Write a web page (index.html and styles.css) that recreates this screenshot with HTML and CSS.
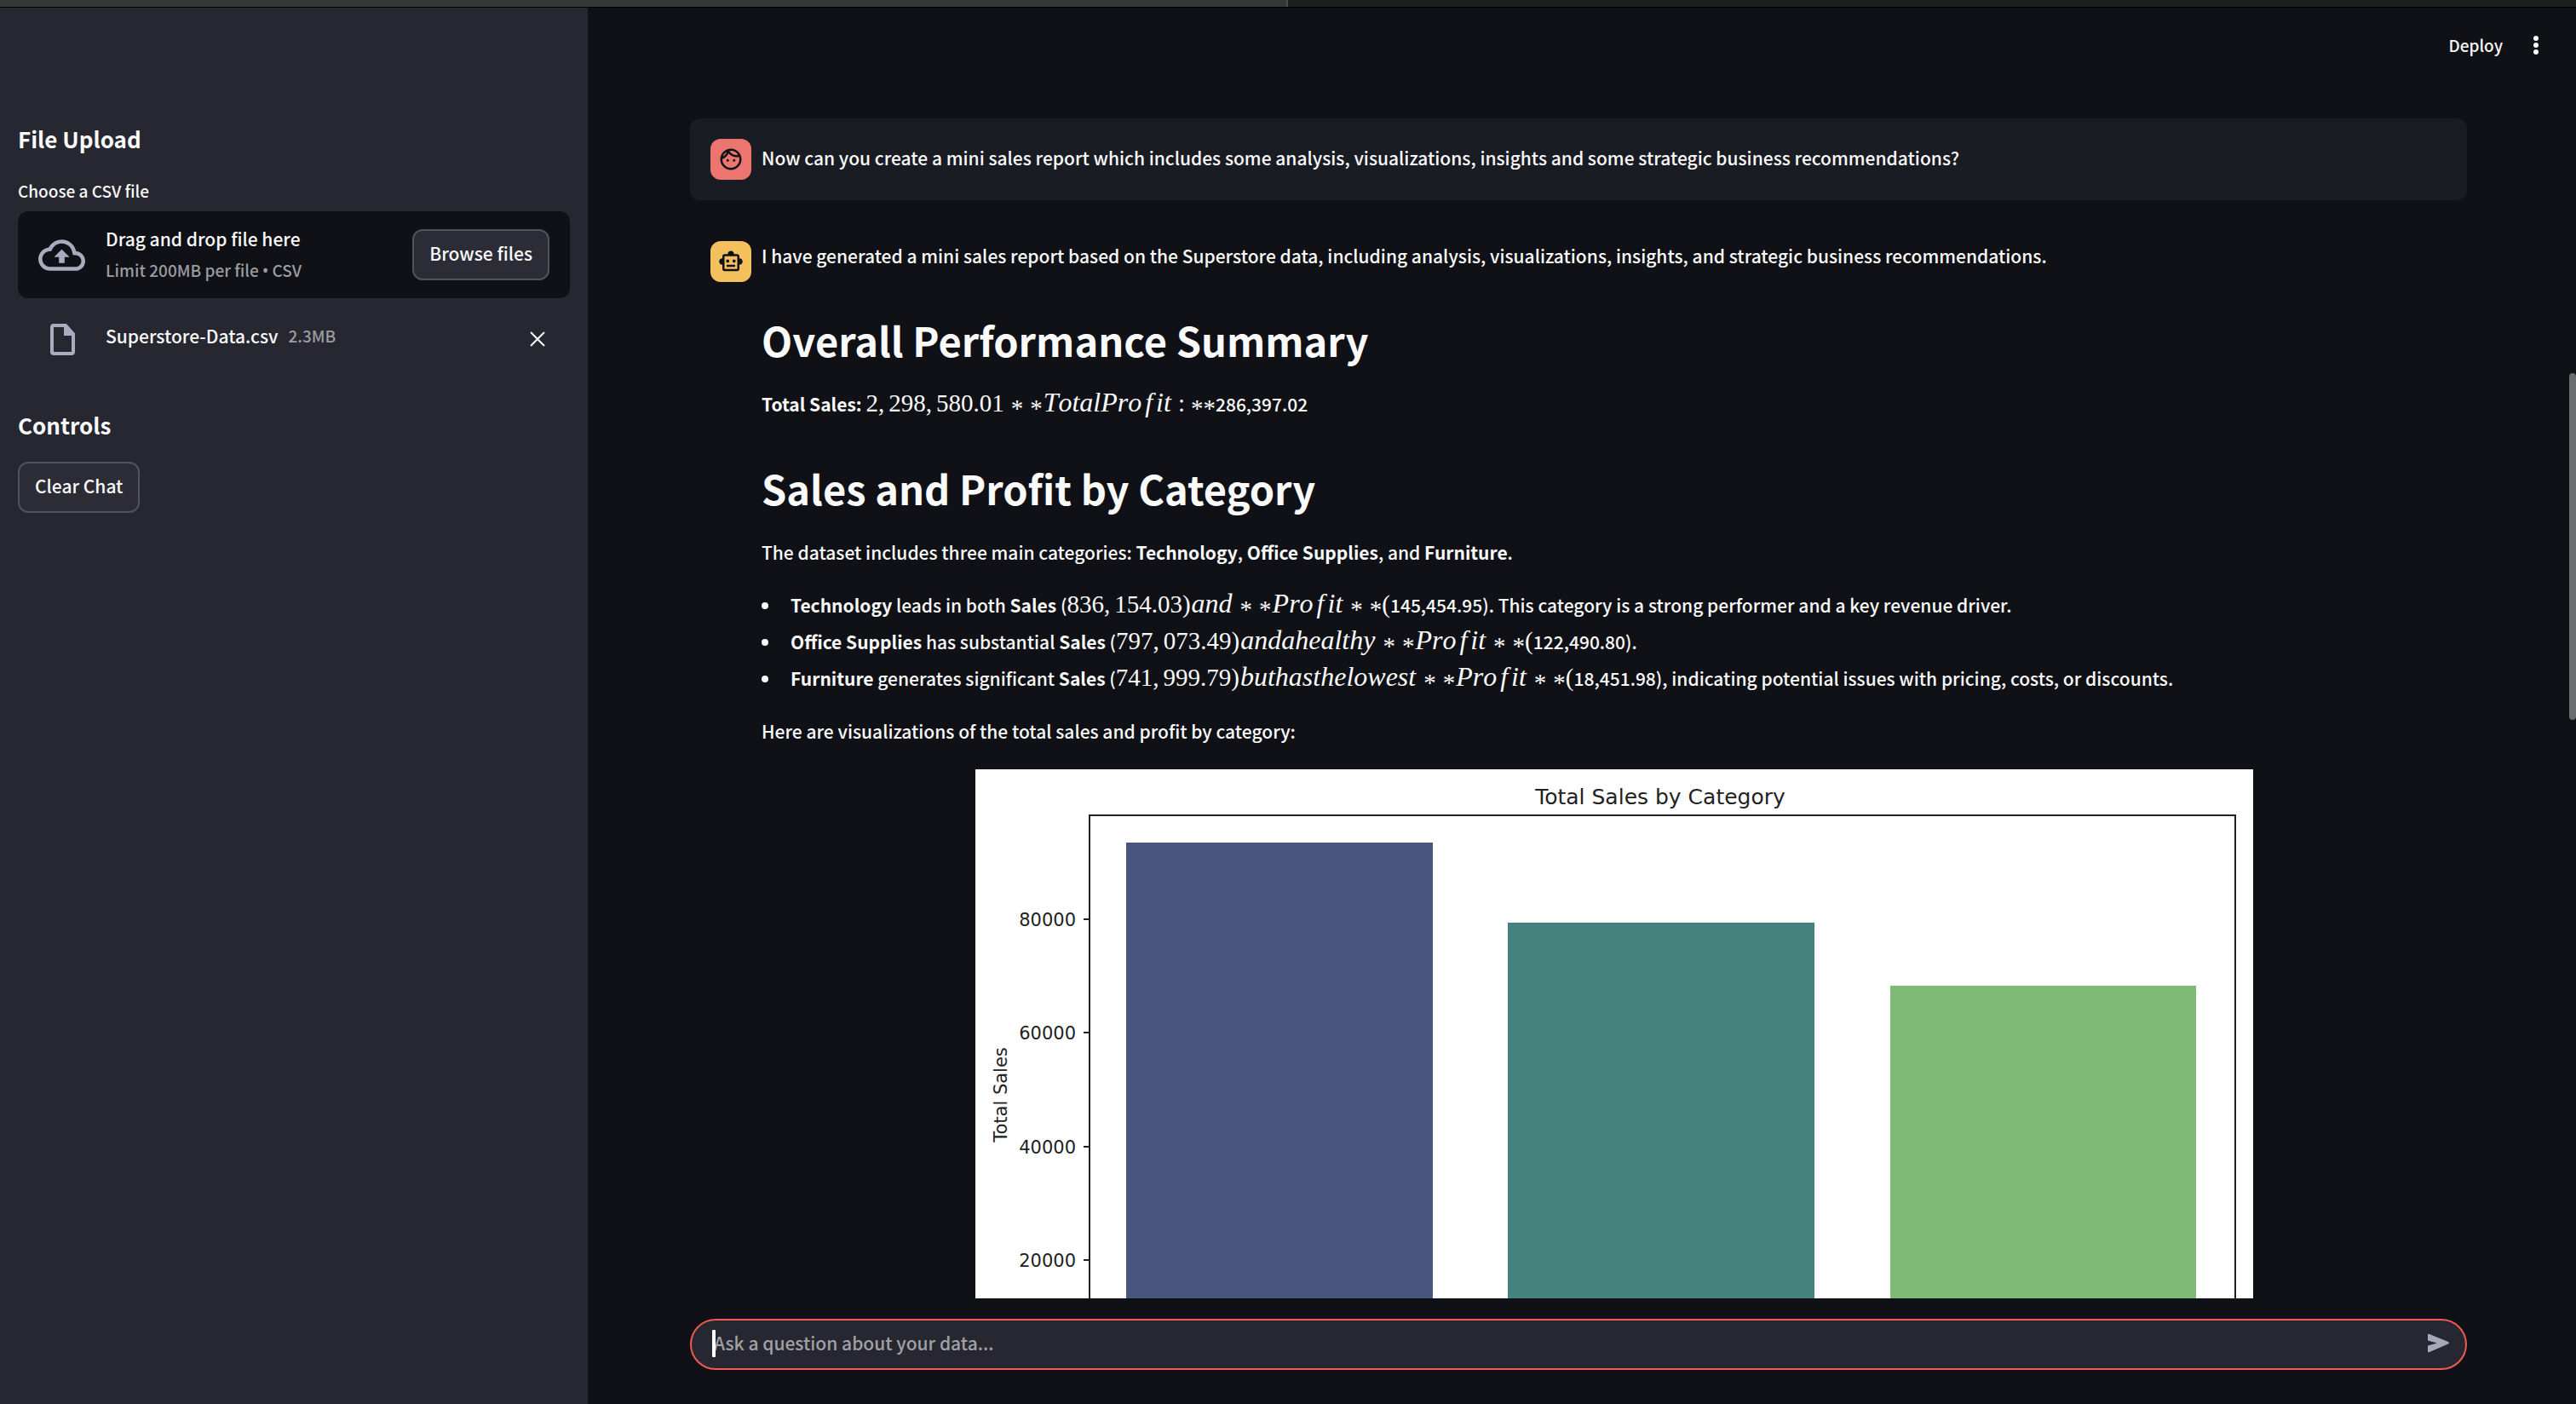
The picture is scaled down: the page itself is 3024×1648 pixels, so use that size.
FILE: index.html
```html
<!DOCTYPE html>
<html lang="en">
<head>
<meta charset="utf-8">
<title>Data Chat</title>
<link rel="stylesheet" href="styles.css">
</head>
<body>
<div class="window-strip"><span class="strip-tab"></span></div>
<div class="app">
  <aside class="sidebar">
    <h3 class="side-title">File Upload</h3>
    <label class="field-label" for="browse">Choose a CSV file</label>
    <div class="dropzone">
      <svg class="cloud-icon" viewBox="0 4 24 16" aria-hidden="true"><path d="M19.35 10.04C18.67 6.59 15.64 4 12 4 9.11 4 6.6 5.64 5.35 8.04 2.34 8.36 0 10.91 0 14c0 3.31 2.69 6 6 6h13c2.76 0 5-2.24 5-5 0-2.64-2.05-4.78-4.65-4.96zM19 18H6c-2.21 0-4-1.79-4-4 0-2.05 1.53-3.76 3.56-3.97l1.07-.11.5-.95C8.08 7.14 9.94 6 12 6c2.62 0 4.88 1.86 5.39 4.43l.3 1.5 1.53.11c1.56.1 2.78 1.41 2.78 2.96 0 1.65-1.35 3-3 3zM8 13h2.55v3h2.9v-3H16l-4-4z"/></svg>
      <div class="drop-text">
        <span>Drag and drop file here</span>
        <small class="hint">Limit 200MB per file <span class="bullet">•</span> CSV</small>
      </div>
      <button class="btn" id="browse" type="button">Browse files</button>
    </div>
    <div class="file-row">
      <svg class="file-icon" viewBox="0 0 29 37" aria-hidden="true"><path class="file-body" d="M4 2h14l9 10v21a2 2 0 0 1-2 2H4a2 2 0 0 1-2-2V4a2 2 0 0 1 2-2z"/><path class="file-fold" d="M16 1h3l9 11v2H16z"/></svg>
      <div class="file-text">
        <span>Superstore-Data.csv</span>
        <small class="hint">2.3MB</small>
      </div>
      <button class="icon-btn" type="button" aria-label="Remove file"><svg class="close-icon" viewBox="0 0 18 18" aria-hidden="true"><path d="M1 1l16 16M17 1L1 17"/></svg></button>
    </div>
    <h3 class="side-title">Controls</h3>
    <button class="btn" type="button">Clear Chat</button>
  </aside>

  <main class="main">
    <header class="toolbar">
      <button class="deploy" type="button">Deploy</button>
      <button class="icon-btn" type="button" aria-label="Menu"><svg class="dots-icon" viewBox="0 0 6 22" aria-hidden="true"><circle cx="3" cy="3" r="3"/><circle cx="3" cy="11" r="3"/><circle cx="3" cy="19" r="3"/></svg></button>
    </header>

    <section class="chat">
      <article class="message user">
        <span class="avatar"><svg viewBox="0 0 24 24" aria-hidden="true"><path d="M10.25 13c0 .69-.56 1.25-1.25 1.25S7.75 13.69 7.75 13s.56-1.25 1.25-1.25 1.25.56 1.25 1.25zM15 11.75c-.69 0-1.25.56-1.25 1.25s.56 1.25 1.25 1.25 1.25-.56 1.25-1.25-.56-1.25-1.25-1.25zM22 12c0 5.52-4.48 10-10 10S2 17.52 2 12 6.48 2 12 2s10 4.48 10 10zM10.66 4.12C12.06 6.44 14.6 8 17.5 8c.46 0 .91-.05 1.34-.12C17.44 5.56 14.9 4 12 4c-.46 0-.91.05-1.34.12zM4.42 9.47c1.71-.97 3.03-2.55 3.66-4.44C6.37 6 5.05 7.58 4.42 9.47zM20 12c0-.78-.12-1.53-.33-2.24-.7.15-1.42.24-2.17.24-3.13 0-5.92-1.44-7.76-3.69C8.69 8.87 6.6 10.88 4 11.86c.01.04 0 .09 0 .14 0 4.41 3.59 8 8 8s8-3.59 8-8z"/></svg></span>
        <div class="content">
          <p>Now can you create a mini sales report which includes some analysis, visualizations, insights and some strategic business recommendations?</p>
        </div>
      </article>

      <article class="message assistant">
        <span class="avatar"><svg viewBox="0 0 24 24" aria-hidden="true"><path d="M20 9V7c0-1.1-.9-2-2-2h-3c0-1.66-1.34-3-3-3S9 3.34 9 5H6c-1.1 0-2 .9-2 2v2c-1.66 0-3 1.34-3 3s1.34 3 3 3v4c0 1.1.9 2 2 2h12c1.1 0 2-.9 2-2v-4c1.66 0 3-1.34 3-3s-1.34-3-3-3zm-2 10H6V7h12v12zM9 13c-.83 0-1.5-.67-1.5-1.5S8.17 10 9 10s1.5.67 1.5 1.5S9.83 13 9 13zm7.5-1.5c0 .83-.67 1.5-1.5 1.5s-1.5-.67-1.5-1.5.67-1.5 1.5-1.5 1.5.67 1.5 1.5zM8 15h8v2H8v-2z"/></svg></span>
        <div class="content">
          <p>I have generated a mini sales report based on the Superstore data, including analysis, visualizations, insights, and strategic business recommendations.</p>
          <h1>Overall Performance Summary</h1>
          <p><strong>Total Sales:</strong> <span class="math">2,<span class="thin"></span>298,<span class="thin"></span>580.01<span class="op">*</span><span class="star">*</span><i>TotalPro<span class="kern">f</span>it</i><span class="rel">:</span><span class="star">**</span></span>286,397.02</p>
          <h1>Sales and Profit by Category</h1>
          <p>The dataset includes three main categories: <strong>Technology</strong>, <strong>Office Supplies</strong>, and <strong>Furniture</strong>.</p>
          <ul>
            <li><strong>Technology</strong> leads in both <strong>Sales</strong> (<span class="math">836,<span class="thin"></span>154.03)<i>and</i><span class="op">*</span><span class="star">*</span><i>Pro<span class="kern">f</span>it</i><span class="op">*</span><span class="star">*</span>(</span>145,454.95). This category is a strong performer and a key revenue driver.</li>
            <li><strong>Office Supplies</strong> has substantial <strong>Sales</strong> (<span class="math">797,<span class="thin"></span>073.49)<i>andahealthy</i><span class="op">*</span><span class="star">*</span><i>Pro<span class="kern">f</span>it</i><span class="op">*</span><span class="star">*</span>(</span>122,490.80).</li>
            <li><strong>Furniture</strong> generates significant <strong>Sales</strong> (<span class="math">741,<span class="thin"></span>999.79)<i>buthasthelowest</i><span class="op">*</span><span class="star">*</span><i>Pro<span class="kern">f</span>it</i><span class="op">*</span><span class="star">*</span>(</span>18,451.98), indicating potential issues with pricing, costs, or discounts.</li>
          </ul>
          <p>Here are visualizations of the total sales and profit by category:</p>
          <svg class="chart" viewBox="0 0 1500 900" role="img" aria-label="Total Sales by Category">
            <rect class="paper" width="1500" height="900"/>
            <rect fill="#48567f" x="177" y="86" width="360" height="740"/>
            <rect fill="#46827d" x="625" y="180" width="360" height="646"/>
            <rect fill="#7fba77" x="1074" y="254" width="359" height="572"/>
            <rect class="frame" x="134" y="54" width="1345" height="772"/>
            <path class="frame" d="M127 176h7M127 309h7M127 443h7M127 576h7"/>
            <text class="chart-title" x="804" y="41">Total Sales by Category</text>
            <g class="ticks"><text x="118" y="184">80000</text><text x="118" y="317">60000</text><text x="118" y="451">40000</text><text x="118" y="584">20000</text></g>
            <text class="axis" transform="translate(37 382) rotate(-90)">Total Sales</text>
          </svg>
        </div>
      </article>
    </section>

    <footer class="composer">
      <form class="chat-input">
        <input type="text" placeholder="Ask a question about your data..." aria-label="Ask a question about your data">
        <span class="caret"></span>
        <button class="icon-btn" type="submit" aria-label="Send"><svg class="send-icon" viewBox="0 0 27 23" aria-hidden="true"><path d="M1 2Q1 0 3 1L25 10Q27 11.500 25 12.500L3 22Q1 23 1 21V14.500L12 11.500L1 8.500Z"/></svg></button>
      </form>
    </footer>
    <span class="scroll-thumb"></span>
  </main>
</div>
</body>
</html>
```
FILE: styles.css
```css
* { box-sizing: border-box; }

body {
  margin: 0;
  height: 100vh;
  display: flex;
  flex-direction: column;
  overflow: hidden;
  background: #0f1116;
  color: #fafafa;
  font-family: "Noto Sans CJK SC", "Noto Sans", sans-serif;
  font-size: 21px;
  font-weight: 500;
  line-height: 34px;
}

h1, h3, p, ul { margin: 0; }

button, input {
  font: inherit;
  color: inherit;
}

button {
  border: 0;
  padding: 0;
  background: none;
}

svg { display: block; }

.window-strip {
  flex: none;
  display: flex;
  height: 9px;
  background: #1e201e;
  border-bottom: 1px solid #000;
}

.strip-tab {
  width: 50%;
  border-right: 2px solid #4a4c4a;
  background: #363835;
}

.app {
  flex: 1;
  min-height: 0;
  display: flex;
}

/* Sidebar */

.sidebar {
  flex: none;
  width: 690px;
  padding: 134px 21px 0;
  background: #262730;
}

.side-title {
  font-size: 26px;
  line-height: 40px;
  font-weight: 700;
}

.field-label {
  display: block;
  margin: 27px 0 10px;
  font-size: 19px;
  line-height: 28px;
}

.dropzone {
  display: flex;
  align-items: center;
  gap: 24px;
  height: 102px;
  padding: 0 24px;
  border-radius: 12px;
  background: #0f1116;
}

.cloud-icon {
  width: 55px;
  height: 37px;
  fill: #a9abbe;
}

.drop-text {
  flex: 1;
  display: flex;
  flex-direction: column;
  gap: 3px;
}

.hint {
  font-size: 19px;
  color: #9b9c9f;
}

.bullet { font-family: "Noto Sans", sans-serif; }

.btn {
  height: 60px;
  padding: 0 18px 4px;
  border: 2px solid #51525b;
  border-radius: 12px;
  background: #2b2c36;
}

.file-row {
  display: flex;
  align-items: center;
  height: 48px;
  margin: 24px 24px 57px 38px;
}

.file-icon {
  width: 29px;
  height: 37px;
}

.file-body {
  fill: none;
  stroke: #a9abbe;
  stroke-width: 4;
}

.file-fold { fill: #a9abbe; }

.file-text {
  display: flex;
  gap: 12px;
  margin-left: 36px;
  padding-bottom: 9px;
}

.file-row .icon-btn {
  margin-left: auto;
  padding: 5px;
}

.close-icon {
  width: 18px;
  height: 18px;
  fill: none;
  stroke: #fafafa;
  stroke-width: 2;
}

.side-title + .btn { margin-top: 23px; }

/* Main column */

.main {
  position: relative;
  flex: 1;
  min-width: 0;
  display: flex;
  flex-direction: column;
  background: #0f1116;
}

.toolbar {
  flex: none;
  display: flex;
  justify-content: flex-end;
  align-items: center;
  gap: 36px;
  height: 88px;
  padding: 0 44px;
}

.deploy { font-size: 19px; }

.dots-icon {
  width: 6px;
  height: 22px;
  fill: #fafafa;
}

.chat {
  flex: 1;
  min-height: 0;
  overflow: hidden;
  display: flex;
  flex-direction: column;
  gap: 24px;
  padding: 42px 128px 0 120px;
}

.message {
  flex: none;
  display: flex;
  gap: 12px;
  padding: 24px 0 24px 24px;
  border-radius: 12px;
}

.user { background: #1a1c24; }

.user .content { padding-top: 5px; }

.avatar {
  flex: none;
  width: 48px;
  height: 48px;
  padding: 9px;
  border-radius: 12px;
  fill: #0f1116;
}

.user .avatar { background: #ec7570; }

.assistant .avatar { background: #f4c05e; }

.content {
  flex: 1;
  min-width: 0;
}

.content h1 {
  margin: 50px 0 26px;
  font-size: 47px;
  line-height: 64px;
  font-weight: 700;
}

.content ul {
  margin: 24px 0 23px;
  padding: 0;
  list-style: none;
}

.content li {
  line-height: 43px;
}

.content li::before {
  content: "";
  display: inline-block;
  width: 8px;
  height: 8px;
  margin: 0 26px 4px 0;
  border-radius: 50%;
  background: #fafafa;
}

/* Inline formulas: upright digits, larger italic variables */

.math {
  font-family: "Liberation Serif", serif;
  font-size: 29px;
  font-weight: 400;
  font-kerning: none;
  line-height: 1px;
}

.math i {
  margin: 0 1px;
  font-size: 32px;
}

.kern { margin: 0 4px; }

.thin { margin-left: 5px; }

.op, .star { vertical-align: -6px; }

.op { margin: 0 8px; }

.rel { margin: 0 7px; }

.chart {
  width: 1500px;
  max-width: 100%;
  margin: 28px auto 0;
}

.paper { fill: #fff; }

.frame {
  fill: none;
  stroke: #222;
  stroke-width: 2;
}

.chart text {
  font-family: "DejaVu Sans", sans-serif;
  font-size: 21px;
  font-weight: 400;
  fill: #222;
}

.chart .chart-title {
  font-size: 25px;
  text-anchor: middle;
}

.ticks { text-anchor: end; }

.axis { text-anchor: middle; }

.composer {
  flex: none;
  padding: 24px 128px 40px 120px;
}

.chat-input {
  position: relative;
  display: flex;
  align-items: center;
  height: 60px;
  padding: 0 18px 0 26px;
  border: 2px solid #f15a52;
  border-radius: 30px;
  background: #262730;
}

.chat-input input {
  flex: 1;
  min-width: 0;
  height: 40px;
  padding: 0 0 5px;
  border: 0;
  outline: 0;
  background: none;
}

.chat-input input::placeholder {
  color: #a0a1a5;
  opacity: 1;
}

.caret {
  position: absolute;
  left: 24px;
  top: 11px;
  width: 4px;
  height: 32px;
  border-radius: 1px;
  background: #fff;
}

.send-icon {
  width: 27px;
  height: 23px;
  margin-bottom: 4px;
  fill: #a6a8b8;
}

.scroll-thumb {
  position: absolute;
  right: 0;
  top: 26.2%;
  width: 8px;
  height: 24.8%;
  border-radius: 4px;
  background: #6b6c70;
}
```
